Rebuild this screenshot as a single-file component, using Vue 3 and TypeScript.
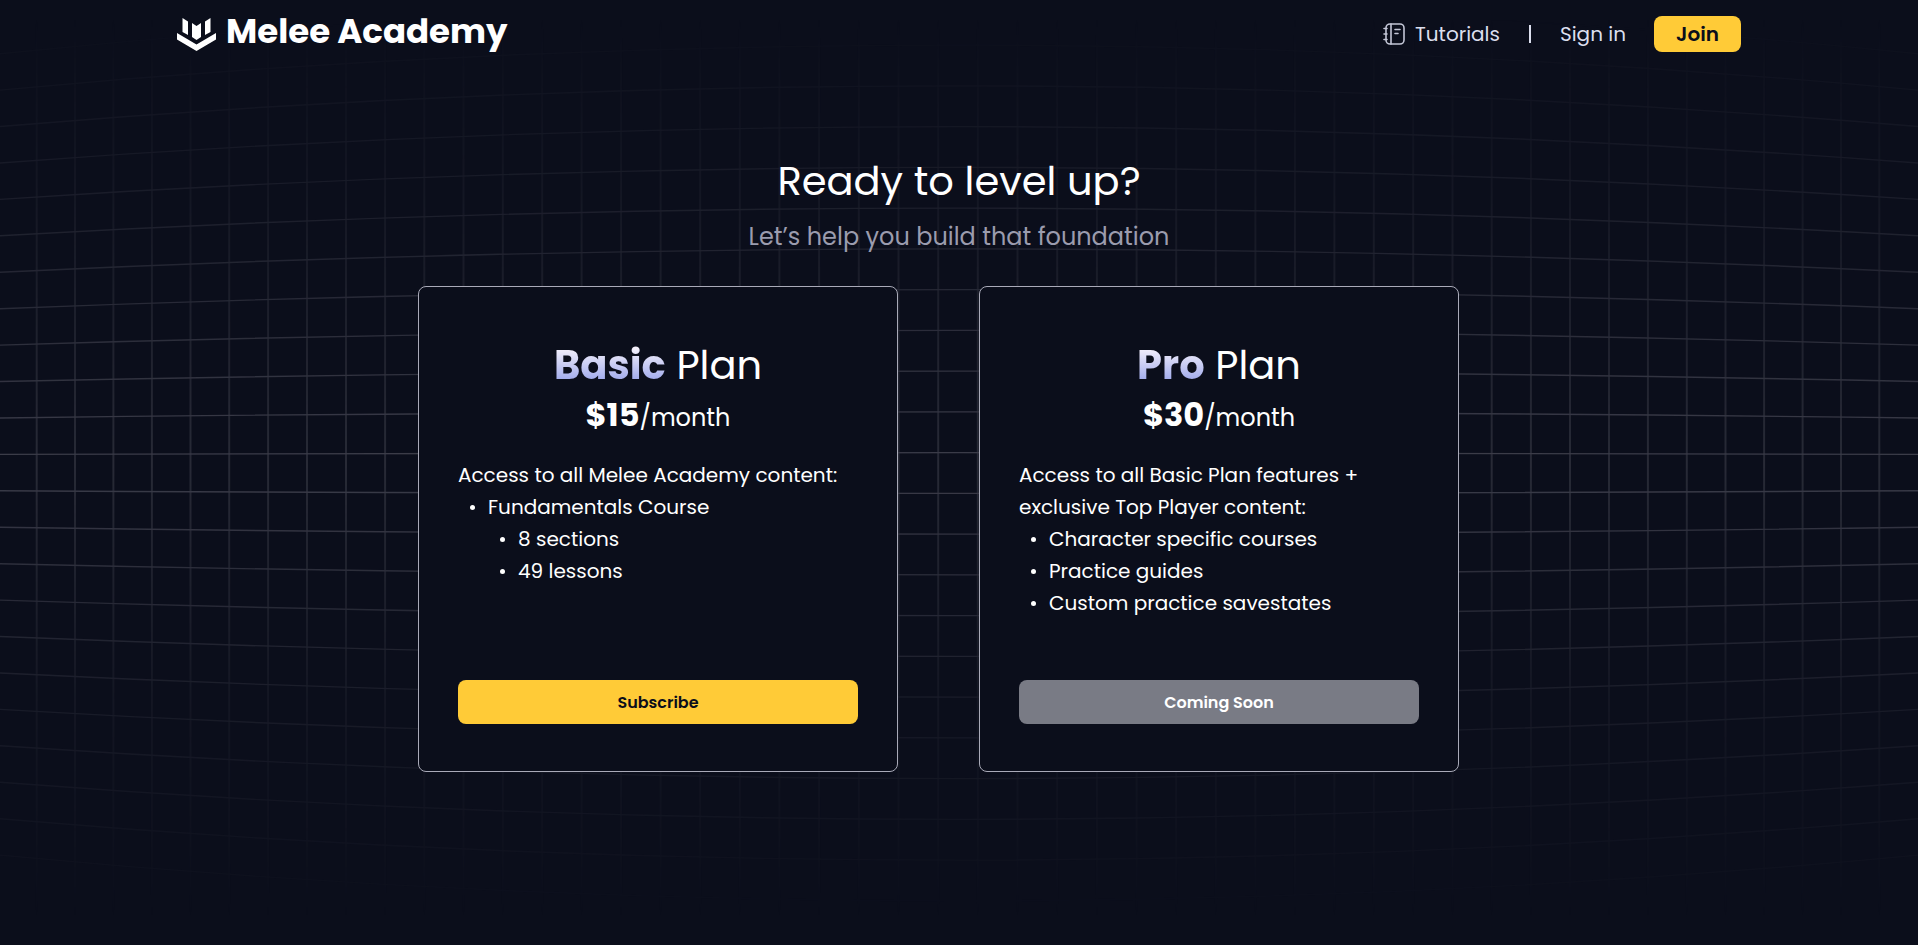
<script setup lang="ts">
interface Item {
  label: string
  children?: string[]
}
interface Plan {
  name: string
  price: string
  intro: string
  items: Item[]
  action: string
  available: boolean
}

const plans: Plan[] = [
  {
    name: 'Basic',
    price: '$15',
    intro: 'Access to all Melee Academy content:',
    items: [{ label: 'Fundamentals Course', children: ['8 sections', '49 lessons'] }],
    action: 'Subscribe',
    available: true,
  },
  {
    name: 'Pro',
    price: '$30',
    intro: 'Access to all Basic Plan features + exclusive Top Player content:',
    items: [
      { label: 'Character specific courses' },
      { label: 'Practice guides' },
      { label: 'Custom practice savestates' },
    ],
    action: 'Coming Soon',
    available: false,
  },
]

// Curved grid: rows bulge away from the middle, columns tighten towards the sides.
const rows: string[] = []
for (let k = -11; k <= 11; k++) {
  const mid = 452.6 + 40.75 * k
  const edge = 454.4 + 36.43 * k
  rows.push(`M0 ${edge.toFixed(1)}Q959 ${(2 * mid - edge).toFixed(1)} 1918 ${edge.toFixed(1)}`)
}
const columns: string[] = []
for (let i = -24; i < 24; i++) {
  const n = i + 0.5
  const x = 958 + 39.7 * n - 0.0009 * n * n * n
  columns.push(`M${x.toFixed(1)} 0V945`)
}
</script>

<template>
  <div class="page">
    <svg class="grid" viewBox="0 0 1918 945" preserveAspectRatio="none" aria-hidden="true">
      <path v-for="d in columns" :key="d" :d="d" class="column" />
      <path v-for="d in rows" :key="d" :d="d" class="row" />
    </svg>

    <header class="header">
      <a href="#" class="brand">
        <svg class="mark" viewBox="0 0 39 33" aria-hidden="true">
          <path d="M0 15 19.500 26.500 39 15V21.500L19.500 33 0 21.500Z" />
          <path d="M5.500 0 11 3.500V17L5.500 14Z" />
          <path d="M33.500 0 28 3.500V17L33.500 14Z" />
          <path d="M15 5 19.500 8 24 5V19L19.500 22 15 19Z" />
        </svg>
        <span>Melee Academy</span>
      </a>
      <nav class="nav">
        <a href="#" class="link">
          <svg class="book" viewBox="0 0 22 22" aria-hidden="true">
            <rect x="3" y="1" width="18" height="20" rx="4" />
            <path d="M8 1V21M1 5.500H4M1 11H4M1 16.500H4M12 6.500H17M12 10.500H15" />
          </svg>
          <span>Tutorials</span>
        </a>
        <span class="divider"></span>
        <a href="#" class="link">Sign in</a>
        <button type="button" class="join">Join</button>
      </nav>
    </header>

    <main class="main">
      <h1>Ready to level up?</h1>
      <p class="subtitle">Let’s help you build that foundation</p>
      <div class="plans">
        <section v-for="plan in plans" :key="plan.name" class="card">
          <h2><strong>{{ plan.name }}</strong> Plan</h2>
          <p class="price"><strong>{{ plan.price }}</strong>/month</p>
          <div class="details">
            <p>{{ plan.intro }}</p>
            <ul>
              <li v-for="item in plan.items" :key="item.label">
                <span>{{ item.label }}</span>
                <ul v-if="item.children">
                  <li v-for="child in item.children" :key="child"><span>{{ child }}</span></li>
                </ul>
              </li>
            </ul>
          </div>
          <button type="button" class="action" :disabled="!plan.available">{{ plan.action }}</button>
        </section>
      </div>
    </main>
  </div>
</template>

<style>
body {
  margin: 0;
  background: #0b0e1b;
}
</style>

<style scoped>
.page {
  position: relative;
  box-sizing: border-box;
  min-height: 100vh;
  background: #0b0e1b;
  color: #fff;
  font-family: Poppins, Inter, "Liberation Sans", sans-serif;
}
h1,
h2,
p,
ul {
  margin: 0;
  padding: 0;
  font-weight: 400;
}
.grid {
  position: absolute;
  inset: 0;
  width: 100%;
  height: 100%;
  fill: none;
  stroke: #3c3d4a;
  mask-image: linear-gradient(transparent 2%, rgb(0 0 0 / 30%) 20%, #000 49%, rgb(0 0 0 / 30%) 74%, transparent 97%);
}
.column {
  stroke-width: 2;
  stroke-opacity: 0.6;
}
.row {
  stroke-width: 1.4;
}
.header {
  position: relative;
  display: flex;
  align-items: center;
  justify-content: space-between;
  box-sizing: border-box;
  max-width: 1564px;
  height: 68px;
  margin: 0 auto;
}
.brand {
  display: flex;
  align-items: center;
  gap: 10px;
  color: #fff;
  font-size: 34px;
  font-weight: 700;
  line-height: 48px;
  text-decoration: none;
}
.brand span {
  padding-bottom: 6px;
}
.mark {
  width: 39px;
  height: 33px;
  fill: #fff;
}
.nav {
  display: flex;
  align-items: center;
}
.link {
  display: flex;
  align-items: center;
  gap: 10px;
  color: #dcdfee;
  font-size: 20px;
  line-height: 34px;
  text-decoration: none;
}
.book {
  width: 22px;
  height: 22px;
  fill: none;
  stroke: #c3c6d6;
  stroke-width: 1.6;
  stroke-linecap: round;
}
.divider {
  width: 2px;
  height: 18px;
  margin: 0 29px;
  background: #dcdfee;
}
.join {
  width: 87px;
  height: 36px;
  margin-left: 28px;
  padding: 0;
  border: 0;
  border-radius: 8px;
  background: #ffcb37;
  color: #0b0e1b;
  font: inherit;
  font-size: 20px;
  font-weight: 600;
}
.main {
  position: relative;
  display: flex;
  flex-direction: column;
  align-items: center;
  padding-top: 83px;
}
h1 {
  font-size: 40px;
  line-height: 60px;
}
.subtitle {
  margin-top: 8px;
  color: #9b9cae;
  font-size: 24px;
  line-height: 36px;
}
.plans {
  display: flex;
  flex-wrap: wrap;
  justify-content: center;
  gap: 40px 81px;
  margin-top: 31px;
  padding-right: 41px;
}
.card {
  display: flex;
  flex-direction: column;
  box-sizing: border-box;
  width: 480px;
  min-height: 486px;
  padding: 48px 39px 47px;
  border: 1px solid #a9aab8;
  border-radius: 8px;
  background: #0b0e1b;
}
h2 {
  font-size: 40px;
  line-height: 60px;
  text-align: center;
}
h2 strong {
  background: linear-gradient(#f4f0fb 20%, #96a2ea 85%);
  background-clip: text;
  color: transparent;
  font-weight: 700;
}
.price {
  font-size: 24px;
  line-height: 40px;
  text-align: center;
}
.price strong {
  font-size: 32px;
  font-weight: 700;
}
.details {
  margin-top: 21px;
  font-size: 20px;
  line-height: 32px;
}
ul {
  list-style: none;
}
li {
  padding-left: 30px;
}
li > span {
  display: flex;
  align-items: center;
}
li > span::before {
  content: "";
  width: 5px;
  height: 5px;
  margin-left: -18px;
  margin-right: 13px;
  border-radius: 50%;
  background: #fff;
}
.action {
  height: 44px;
  margin-top: auto;
  padding: 0;
  border: 0;
  border-radius: 8px;
  background: #ffcb37;
  color: #0b0e1b;
  font: inherit;
  font-size: 16px;
  font-weight: 600;
}
.action:disabled {
  background: #797b85;
  color: #fff;
}
</style>
